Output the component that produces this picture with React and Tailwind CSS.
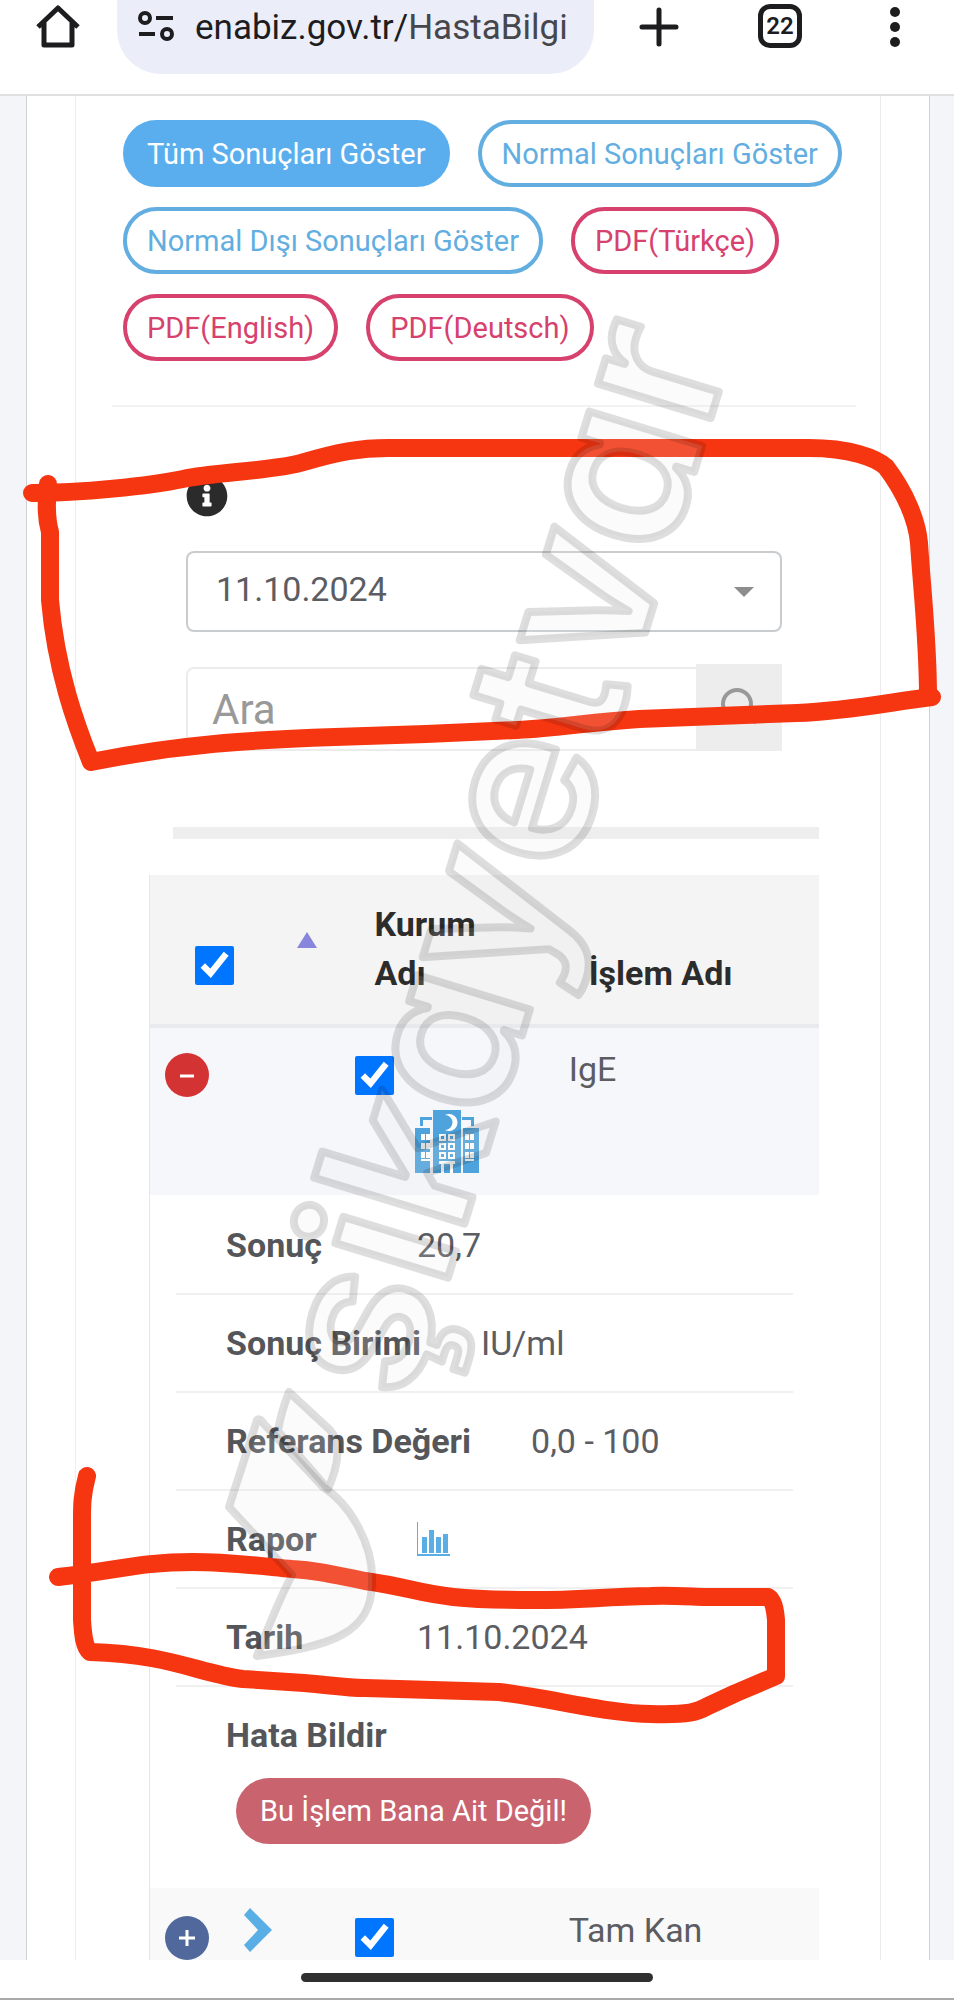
// src/App.jsx
import React from 'react';
import { FaInfoCircle } from 'react-icons/fa';

const filters = [
    { label: 'Tüm Sonuçları Göster', style: 'bg-[#5aaeee] border-[#5aaeee] text-white' },
    { label: 'Normal Sonuçları Göster', style: 'bg-white border-[#62aee0] text-[#62aee0]' },
    { label: 'Normal Dışı Sonuçları Göster', style: 'bg-white border-[#62aee0] text-[#62aee0]' },
    { label: 'PDF(Türkçe)', style: 'bg-white border-[#d6416d] text-[#d6416d]' },
    { label: 'PDF(English)', style: 'bg-white border-[#d6416d] text-[#d6416d]' },
    { label: 'PDF(Deutsch)', style: 'bg-white border-[#d6416d] text-[#d6416d]' },
];

const ChartIcon = () => (
    <svg viewBox="0 0 34 36" className="w-[34px] h-9" fill="#5aaee6">
        <path d="M0 1h1v32h32v2H0z" />
        <path d="M5 16h5v16H5zM12 9h5v23h-5zM19 16h5v16h-5zM26 13h5v19h-5z" />
    </svg>
);

const details = [
    { label: 'Sonuç', value: '20,7' },
    { label: 'Sonuç Birimi', value: 'IU/ml' },
    { label: 'Referans Değeri', value: '0,0 - 100' },
    { label: 'Rapor', value: <a href="#rapor" aria-label="Rapor"><ChartIcon /></a> },
    { label: 'Tarih', value: '11.10.2024' },
];

const BrowserBar = () => (
    <header className="h-24 flex items-start bg-white border-b-2 border-[#e0e0e2] text-[#1d1d1f]">
        <button type="button" aria-label="Ana sayfa" className="ml-9 mt-1">
            <svg viewBox="0 0 44 44" className="size-11" fill="none" stroke="currentColor" strokeWidth="5">
                <path d="M2 23L22 4l20 19M8 18v23h28V18" strokeLinejoin="round" />
            </svg>
        </button>
        <div className="ml-[37px] w-1/2 h-[74px] flex items-start rounded-b-[44px] bg-[#ebeef8] pl-5">
            <svg viewBox="0 0 38 34" className="mt-2 w-[38px] h-[34px] shrink-0" fill="none" stroke="currentColor" strokeWidth="4">
                <circle cx="8" cy="10" r="5" />
                <path d="M19 10h17M2 26h16" />
                <circle cx="30" cy="26" r="5" />
            </svg>
            <span className="ml-5 mt-2 text-[35px] leading-10 whitespace-nowrap">
                enabiz.gov.tr/<span className="text-[#46474c]">HastaBilgi</span>
            </span>
        </div>
        <div className="flex-1 flex justify-between pl-[45px] pr-[45px]">
            <button type="button" aria-label="Yeni sekme" className="mt-1.5">
                <svg viewBox="0 0 40 40" className="size-10" stroke="currentColor" strokeWidth="5" strokeLinecap="round">
                    <path d="M3 20h34M20 3v34" />
                </svg>
            </button>
            <button type="button" className="mt-1 size-11 rounded-xl border-[5px] border-current text-[24px] leading-8 font-semibold">
                22
            </button>
            <button type="button" aria-label="Menü" className="mt-1.5">
                <svg viewBox="0 0 28 40" className="w-7 h-10" fill="currentColor">
                    <circle cx="14" cy="5" r="5" />
                    <circle cx="14" cy="20" r="5" />
                    <circle cx="14" cy="35" r="5" />
                </svg>
            </button>
        </div>
    </header>
);

const HospitalIcon = () => (
    <svg viewBox="0 0 64 64" className="size-16" fill="#4ea3dc">
        <path d="M5 8h12v3H8v6H5zM47 8h12v9h-3v-6h-9z" />
        <path d="M0 19h15v45H0zM48 19h16v45H48z" />
        <path d="M18 1h28v63H18z" />
        <path d="M30 6a8.500 8.500 0 1 1 0 15a7.500 7.500 0 1 0 0-15z" fill="#fff" />
        <g fill="#fff">
            {[25, 34, 43].map((y) => (
                <g key={y}>
                    <path d={`M6 ${y}h4v6H6zM11 ${y}h4v6h-4zM50 ${y}h4v6h-4zM55 ${y}h4v6h-4z`} />
                    <path d={`M24 ${y}h7v7h-7zM33 ${y}h7v7h-7z`} />
                </g>
            ))}
            <path d="M6 50h9v2H6zM50 50h9v2h-9z" />
            <path d="M24 52h16v3h-2v9h-3v-9h-6v9h-3v-9h-2z" />
        </g>
        <g fill="#4ea3dc">
            {[25, 34, 43].map((y) => (
                <path key={y} d={`M26 ${y + 2}h3v3h-3zM35 ${y + 2}h3v3h-3z`} />
            ))}
        </g>
    </svg>
);

const RowToggle = ({ open }) => (
    <button
        type="button"
        aria-label={open ? 'Kapat' : 'Aç'}
        className={`size-11 shrink-0 rounded-full flex items-center justify-center ${open ? 'bg-[#d33333]' : 'bg-[#50689b]'}`}
    >
        <svg viewBox="0 0 16 16" className="size-4" stroke="#fff" strokeWidth="3">
            <path d={open ? 'M1 9h14' : 'M0 8h16M8 0v16'} />
        </svg>
    </button>
);

const ResultsTable = () => (
    <table className="w-full table-fixed border-l border-[#e6e6e8] text-left text-[34px] leading-[49px]">
        <colgroup>
            <col className="w-[205px]" />
            <col className="w-[29%]" />
            <col />
        </colgroup>
        <thead className="bg-[#f4f4f4] text-[#2c2c2c]">
            <tr className="h-[151px] border-b-4 border-[#e9eaee]">
                <th scope="col" className="align-top pt-[57px] pl-[45px]">
                    <div className="flex items-start">
                        <input type="checkbox" defaultChecked aria-label="Tümünü seç" className="mt-3.5 size-[39px]" />
                        <svg viewBox="0 0 20 16" className="ml-[63px] w-5 h-4" fill="#8886dc">
                            <path d="M10 0l10 16H0z" />
                        </svg>
                    </div>
                </th>
                <th scope="col" className="align-top pt-[25px] pl-5 pr-10 font-bold">Kurum Adı</th>
                <th scope="col" className="align-bottom pb-[26px] pl-10 font-bold">İşlem Adı</th>
            </tr>
        </thead>
        <tbody className="text-[#5c5d62]">
            <tr className="h-[169px] bg-[#f6f7fb]">
                <td className="align-top pt-[25px] pl-[15px]"><RowToggle open /></td>
                <td className="align-top pt-7">
                    <input type="checkbox" defaultChecked aria-label="IgE" className="block size-[39px]" />
                    <div className="mt-3.5 ml-[60px]"><HospitalIcon /></div>
                </td>
                <td className="align-top pt-[17px] pl-5">IgE</td>
            </tr>
            <tr>
                <td colSpan={3} className="px-[26px] pt-0.5 pb-11">
                    <dl>
                        {details.map((item) => (
                            <div key={item.label} className="h-[98px] flex items-center gap-[60px] pl-[50px] border-b-2 border-[#f0f0f1]">
                                <dt className="min-w-[131px] font-bold text-[#55565a]">{item.label}</dt>
                                <dd>{item.value}</dd>
                            </div>
                        ))}
                        <div className="pl-[50px] pt-6">
                            <dt className="font-bold text-[#55565a]">Hata Bildir</dt>
                            <dd className="mt-[18px] ml-2.5">
                                <button type="button" className="h-[66px] px-6 rounded-full bg-[#c9636e] text-white text-[29px] leading-9">
                                    Bu İşlem Bana Ait Değil!
                                </button>
                            </dd>
                        </div>
                    </dl>
                </td>
            </tr>
            <tr className="h-[72px] bg-[#f9f9f9]">
                <td className="align-top pl-[15px] pt-5">
                    <div className="flex items-start">
                        <div className="mt-2"><RowToggle /></div>
                        <svg viewBox="0 0 30 44" className="ml-[34px] w-[30px] h-11" fill="#5aaee6">
                            <path d="M7 0l22 22L7 44l-6-7 14-15L1 7z" />
                        </svg>
                    </div>
                </td>
                <td className="align-top pt-[30px]">
                    <input type="checkbox" defaultChecked aria-label="Tam Kan" className="block size-[39px]" />
                </td>
                <td className="align-top pt-[18px] pl-5">Tam Kan</td>
            </tr>
        </tbody>
    </table>
);

// Pen marks and the site watermark, both drawn over the page
const Overlay = () => (
    <svg viewBox="0 0 954 2000" className="absolute top-0 left-0 w-full pointer-events-none">
        <g fill="none" stroke="#f63511" strokeWidth="18" strokeLinecap="round" strokeLinejoin="round">
            <path d="M32 493C80 493 150 486 183 479S275 471 304 462C335 453 360 447 395 448H809C850 448 876 458 886 467C905 492 917 520 919 543C922 590 928 640 928 697" />
            <path d="M932 697C890 702 850 711 797 713L639 719C590 722 560 728 517 730L426 734L335 737C250 740 180 744 91 762C76 725 56 670 50 600V532C46 518 46 505 48 484" />
            <path d="M87 1476C82 1495 82 1505 82 1520V1620C83 1635 84 1647 90 1652C170 1654 200 1674 243 1679L304 1683C330 1685 345 1688 365 1688L499 1692C550 1698 610 1714 651 1714C690 1715 697 1712 708 1706L736 1693L776 1676V1620C775 1608 773 1600 768 1597H706C680 1596 665 1595 651 1596C600 1597 580 1600 535 1600C420 1600 430 1590 365 1581C330 1574 320 1571 292 1569C260 1566 230 1562 193 1562C140 1562 120 1570 58 1577" />
        </g>
        <g fill="#e8e8e8" fillOpacity="0.160" stroke="#000" strokeOpacity="0.130" strokeWidth="8" strokeLinejoin="round">
            <text
                transform="translate(409 1405) rotate(-73)"
                className="font-['Inter',sans-serif] font-semibold text-[216px] [font-feature-settings:'cv11']"
            >
                şikayetvar
            </text>
            <path d="M289 1392L330 1430Q346 1448 328 1489L278 1431Q281 1412 289 1392z" />
            <path d="M257 1420L229 1507L292 1575Q276 1606 257 1656C330 1646 372 1634 372 1583C374 1545 350 1504 323 1487L264 1424Q260 1418 257 1420z" />
        </g>
    </svg>
);

const App = () => (
    <div className="relative min-h-screen flex flex-col bg-white font-['Roboto',sans-serif]">
        <BrowserBar />
        <div className="flex-1 pl-[26px] pr-6 bg-[#f3f5f9]">
            <main className="h-full border-x border-[#d0d1d5] bg-white px-12">
                <div className="h-full border-x border-[#ececee]">
                    <section className="ml-9 mr-6 pl-[11px] pt-6 pb-11 flex flex-wrap gap-x-7 gap-y-5 border-b-2 border-[#f2f2f3]">
                        {filters.map((item) => (
                            <button
                                key={item.label}
                                type="button"
                                className={`h-[67px] px-5 rounded-full border-4 text-[29px] leading-9 ${item.style}`}
                            >
                                {item.label}
                            </button>
                        ))}
                    </section>

                    <section className="ml-[110px] mr-[98px] pt-[68px]">
                        <FaInfoCircle className="size-[42px] text-[#2b2b2b]" />
                        <div className="relative mt-[34px]">
                            <select
                                aria-label="Tarih"
                                className="block w-full h-[81px] px-7 pb-1 appearance-none rounded-lg border-2 border-[#c9cccf] bg-white text-[34px] text-[#5c5d62]"
                            >
                                <option>11.10.2024</option>
                            </select>
                            <svg viewBox="0 0 20 10" className="absolute right-7 top-9 w-5 h-2.5" fill="#8d8d8d">
                                <path d="M0 0h20L10 10z" />
                            </svg>
                        </div>
                        <div className="mt-8 flex items-end">
                            <input
                                type="text"
                                aria-label="Ara"
                                placeholder="Ara"
                                className="min-w-0 flex-1 h-[84px] px-6 rounded-l-lg border-2 border-r-0 border-[#ececec] text-[42px] placeholder:text-[#999]"
                            />
                            <button type="button" aria-label="Ara" className="w-[86px] h-[87px] bg-[#ededed] flex justify-center pt-6">
                                <svg viewBox="0 0 36 36" className="size-9" fill="none" stroke="#999" strokeWidth="4">
                                    <circle cx="16" cy="16" r="14" />
                                    <path d="M26 26l9 9" />
                                </svg>
                            </button>
                        </div>
                    </section>

                    <div className="ml-[73px] mr-[61px] pt-[76px]">
                        <div className="ml-6 h-3 bg-[#eeeeee]" />
                        <div className="pt-9">
                            <ResultsTable />
                        </div>
                    </div>
                </div>
            </main>
        </div>
        <footer className="h-10 flex justify-center pt-[13px] bg-white border-b-2 border-[#a9a9a9]">
            <div className="w-[37%] h-[9px] rounded-full bg-[#303030]" />
        </footer>
        <Overlay />
    </div>
);

export default App;
